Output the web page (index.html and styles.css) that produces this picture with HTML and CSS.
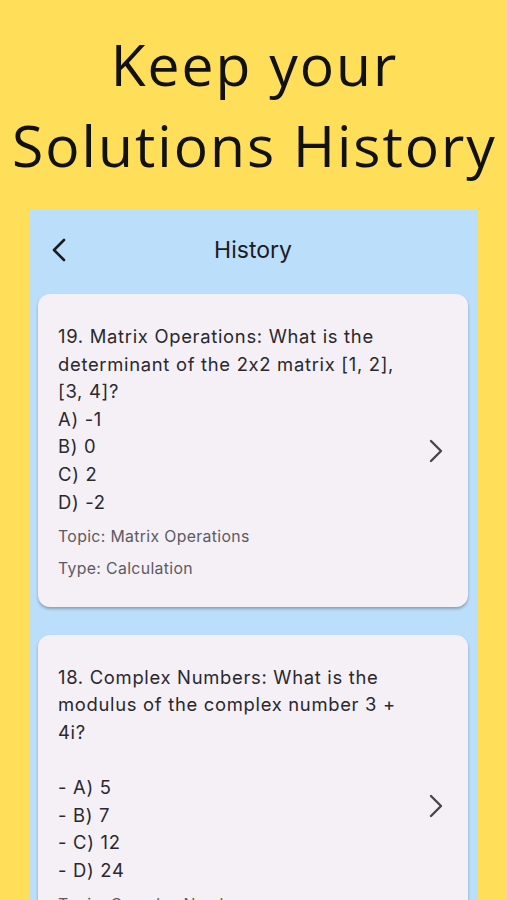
FILE: index.html
```html
<!DOCTYPE html>
<html>
<head>
<meta charset="utf-8">
<link rel="stylesheet" href="styles.css">
</head>
<body>
<div class="screen">
  <h1 class="headline">Keep your<br>Solutions History</h1>
  <div class="panel">
    <div class="appbar">
      <svg class="back" width="16" height="24" viewBox="0 0 16 24"><path d="M13 2 L3 12 L13 22" fill="none" stroke="#1d1b20" stroke-width="2.6" stroke-linecap="round" stroke-linejoin="round"/></svg>
      <div class="title">History</div>
    </div>
    <div class="list">
      <div class="card">
        <div class="content">
          <div class="question">19. Matrix Operations: What is the determinant of the 2x2 matrix [1, 2], [3, 4]?<br>A) -1<br>B) 0<br>C) 2<br>D) -2</div>
          <div class="meta">Topic: Matrix Operations</div>
          <div class="meta">Type: Calculation</div>
        </div>
        <svg class="chev" width="16" height="24" viewBox="0 0 16 24"><path d="M3 2 L13 12 L3 22" fill="none" stroke="#49454f" stroke-width="2.4" stroke-linecap="round" stroke-linejoin="round"/></svg>
      </div>
      <div class="card">
        <div class="content">
          <div class="question">18. Complex Numbers: What is the modulus of the complex number 3 + 4i?<br><br>- A) 5<br>- B) 7<br>- C) 12<br>- D) 24</div>
          <div class="meta">Topic: Complex Numbers</div>
          <div class="meta">Type: Calculation</div>
        </div>
        <svg class="chev" width="16" height="24" viewBox="0 0 16 24"><path d="M3 2 L13 12 L3 22" fill="none" stroke="#49454f" stroke-width="2.4" stroke-linecap="round" stroke-linejoin="round"/></svg>
      </div>
    </div>
  </div>
</div>
</body>
</html>
```
FILE: styles.css
```css
html, body {
  margin: 0;
  padding: 0;
  background: #ffde59;
}
.screen {
  width: 507px;
  height: 900px;
  overflow: hidden;
  background: #ffde59;
  display: flex;
  flex-direction: column;
}
.headline {
  margin: 0;
  padding: 24px 0 24px 2px;
  font-family: "Open Sans", sans-serif;
  font-weight: 400;
  font-size: 57px;
  line-height: 81px;
  text-align: center;
  color: #111111;
  letter-spacing: 2px;
}
.panel {
  margin-left: 29px;
  width: 449px;
  flex: 1;
  background: #bbdefb;
  padding: 0 10px 0 9px;
  box-sizing: border-box;
  font-family: Inter, "Noto Sans", sans-serif;
}
.appbar {
  position: relative;
  height: 80px;
  display: flex;
  align-items: center;
  justify-content: center;
  margin-bottom: 4px;
}
.back {
  position: absolute;
  left: 13px;
  top: 28px;
}
.title {
  font-size: 23px;
  color: #1d1b20;
  letter-spacing: 0;
}
.list {
  display: flex;
  flex-direction: column;
  gap: 28px;
}
.card {
  background: #f4f0f6;
  border-radius: 12px;
  box-shadow: 0 2px 3px rgba(0, 0, 0, 0.28);
  padding: 29px 24px 27px 20px;
  display: flex;
  align-items: center;
  gap: 14px;
}
.content {
  flex: 1;
}
.question {
  font-size: 18.4px;
  line-height: 27.6px;
  letter-spacing: 0.7px;
  color: #2a282d;
}
.meta {
  font-size: 15.8px;
  line-height: 23px;
  letter-spacing: 0.35px;
  color: #5d5a61;
  margin-top: 9px;
}
.meta + .meta {
  margin-top: 8.5px;
}
.chev {
  flex: none;
}
```
